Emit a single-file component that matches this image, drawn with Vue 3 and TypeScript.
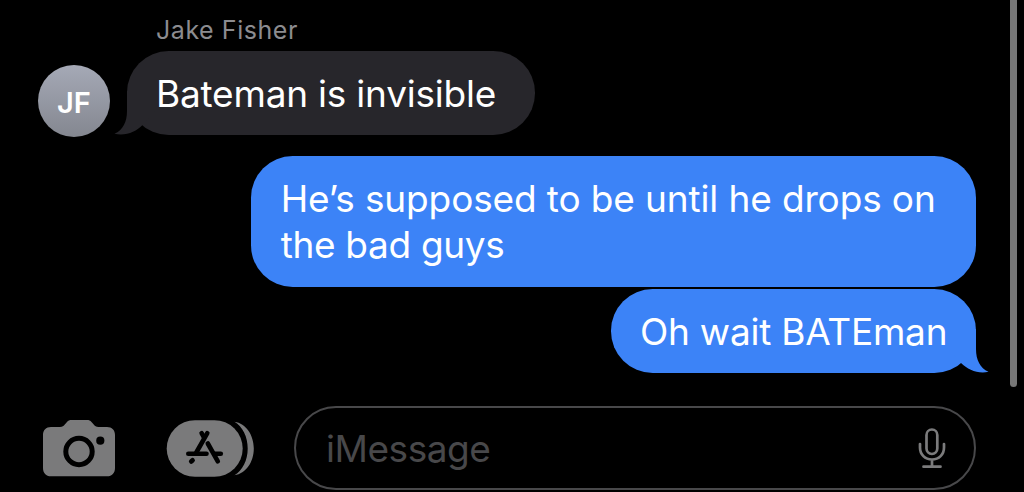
<script setup lang="ts">
interface Message {
  id: number
  side: 'received' | 'sent'
  lines: string[]
  tail: boolean
}

const sender = { name: 'Jake Fisher', initials: 'JF' }

const received: Message = { id: 1, side: 'received', lines: ['Bateman is invisible'], tail: true }

const sent: Message[] = [
  { id: 2, side: 'sent', lines: ['He’s supposed to be until he drops on', 'the bad guys'], tail: false },
  { id: 3, side: 'sent', lines: ['Oh wait BATEman'], tail: true },
]
</script>

<template>
  <main class="screen">
    <section class="thread">
      <div class="sender"><span>{{ sender.name }}</span></div>
      <div class="incoming">
        <div class="avatar"><span>{{ sender.initials }}</span></div>
        <div class="bubble received">
          <span v-for="line in received.lines" :key="line" class="line l10">{{ line }}</span>
          <svg class="tail tail-left" width="40" height="44" viewBox="0 0 40 44">
            <path d="M12 0V20C12 31 8 39 -0.500 42.800C11 45 21 41 27.500 34L40 20V0Z" />
          </svg>
        </div>
      </div>
      <div class="outgoing">
        <div v-for="m in sent" :key="m.id" class="bubble sent" :class="'sent-' + m.id">
          <span v-for="(line, i) in m.lines" :key="i" class="line" :class="'l' + m.id + i">{{ line }}</span>
          <svg v-if="m.tail" class="tail tail-right" width="40" height="44" viewBox="0 0 40 44">
            <path d="M27 0V20C27 31 31 39 39.500 42.800C29 45 19 41 12 34L0 20V0Z" />
          </svg>
        </div>
      </div>
    </section>

    <footer class="composer">
      <svg class="camera" width="72" height="57" viewBox="43 420 72 57">
        <path
          fill="#7a7a7b"
          d="M51 427H60C62.500 427 63.500 426 65 424.300L67 422C68.300 420.500 69.500 420 71.500 420H87C89 420 90.300 420.500 91.500 422L93.500 424.300C95 426 96 427 98.500 427H107C112 427 115 430 115 435V468C115 473 112 476.300 107 476.300H51C46 476.300 43 473 43 468V435C43 430 46 427 51 427Z"
        />
        <circle cx="79" cy="451.500" r="13.200" fill="none" stroke="#000" stroke-width="5" />
        <circle cx="100.300" cy="440.700" r="4.100" fill="#000" />
      </svg>
      <svg class="apps" width="88" height="57" viewBox="166 420 88 57">
        <rect x="166.700" y="420.200" width="76" height="56.600" rx="28.300" fill="#7a7a7b" />
        <path
          fill="#7a7a7b"
          d="M234.500 421.700C246 423.500 253.800 435 253.800 448.500C253.800 462 246 473.500 234.500 475.300C242.500 470.500 247.700 460.500 247.700 448.500C247.700 436.500 242.500 426.500 234.500 421.700Z"
        />
        <g fill="none" stroke="#000" stroke-width="4.600" stroke-linecap="round">
          <path d="M207.300 433.200L196.300 452.500" />
          <path d="M201.600 433.200L203.800 437" />
          <path d="M207.800 443.500L217.800 461.300" />
          <path d="M188.300 453.800H206.500" />
          <path d="M214.500 453.800H220.800" />
          <path d="M192.600 460.200L191.200 461.500" />
        </g>
      </svg>
      <div class="field">
        <span class="placeholder">iMessage</span>
        <svg class="mic" width="28" height="42" viewBox="918 427 28 42" fill="none" stroke="#7b7b7c" stroke-width="2.700" stroke-linecap="round">
          <rect x="926.500" y="429.500" width="10.800" height="24.500" rx="5.400" />
          <path d="M920 444V447.500C920 454.500 925 459.500 932 459.500S944 454.500 944 447.500V444M932 459.500V466.600M923.500 466.700H940.500" />
        </svg>
      </div>
    </footer>
    <div class="scrollbar"></div>
  </main>
</template>

<style>
html,
body {
  margin: 0;
  background: #000;
}
</style>

<style scoped>
.screen {
  position: relative;
  display: flex;
  flex-direction: column;
  box-sizing: border-box;
  width: 1024px;
  height: 492px;
  overflow: hidden;
  background: #000;
  color: #fff;
  font-family: Inter, "Liberation Sans", sans-serif;
}

.thread {
  display: flex;
  flex-direction: column;
  height: 406px;
  box-sizing: border-box;
  padding: 15px 48.500px 0 38px;
}

.sender {
  height: 36px;
  padding-left: 118px;
  color: #8c8c90;
  font-size: 25px;
  line-height: 30px;
  letter-spacing: 0.550px;
}

.incoming {
  display: flex;
  align-items: flex-start;
  gap: 17px;
  height: 105px;
}

.avatar {
  display: flex;
  align-items: center;
  justify-content: center;
  box-sizing: border-box;
  width: 72px;
  height: 72px;
  margin-top: 14px;
  padding-top: 3px;
  border-radius: 50%;
  background: linear-gradient(#a5a9b6, #848790);
  font-size: 29px;
  font-weight: 600;
}

.bubble {
  position: relative;
  display: flex;
  flex-direction: column;
  box-sizing: border-box;
  border-radius: 41.700px;
  padding: 20px 29px 18px;
  font-size: 37px;
  line-height: 45.500px;
  white-space: nowrap;
}

.line {
  position: relative;
  z-index: 1;
}

.l10 {
  letter-spacing: -0.210px;
}

.l20 {
  letter-spacing: -0.130px;
}

.l21 {
  letter-spacing: -0.320px;
}

.l30 {
  letter-spacing: -0.240px;
}

.received {
  width: 408px;
  height: 83.500px;
  background: #27262b;
}

.outgoing {
  display: flex;
  flex-direction: column;
  align-items: flex-end;
  gap: 2.500px;
}

.sent {
  background: #3c83f7;
}

.sent-2 {
  width: 724.500px;
  height: 130.500px;
  padding-left: 29.700px;
}

.sent-3 {
  width: 365px;
  height: 83.500px;
  padding-left: 29.500px;
}

.tail {
  position: absolute;
  bottom: 0;
  overflow: visible;
}

.tail-left {
  left: -12px;
  fill: #27262b;
}

.tail-right {
  right: -13px;
  fill: #3c83f7;
}

.composer {
  display: flex;
  align-items: flex-start;
  height: 86px;
  padding-left: 43px;
}

.camera,
.apps {
  margin-top: 14px;
}

.apps {
  margin-left: 51px;
}

.field {
  display: flex;
  align-items: center;
  justify-content: space-between;
  box-sizing: border-box;
  width: 682px;
  height: 83.500px;
  margin-left: 40px;
  padding: 0 28px 0 30px;
  border: 2.500px solid #48484a;
  border-radius: 42px;
}

.placeholder {
  padding-top: 2px;
  color: #48484a;
  font-size: 37px;
  line-height: 46px;
  letter-spacing: -0.450px;
}

.scrollbar {
  position: absolute;
  top: -10px;
  left: 1009.500px;
  width: 7.500px;
  height: 397px;
  border-radius: 4px;
  background: #777;
}
</style>
